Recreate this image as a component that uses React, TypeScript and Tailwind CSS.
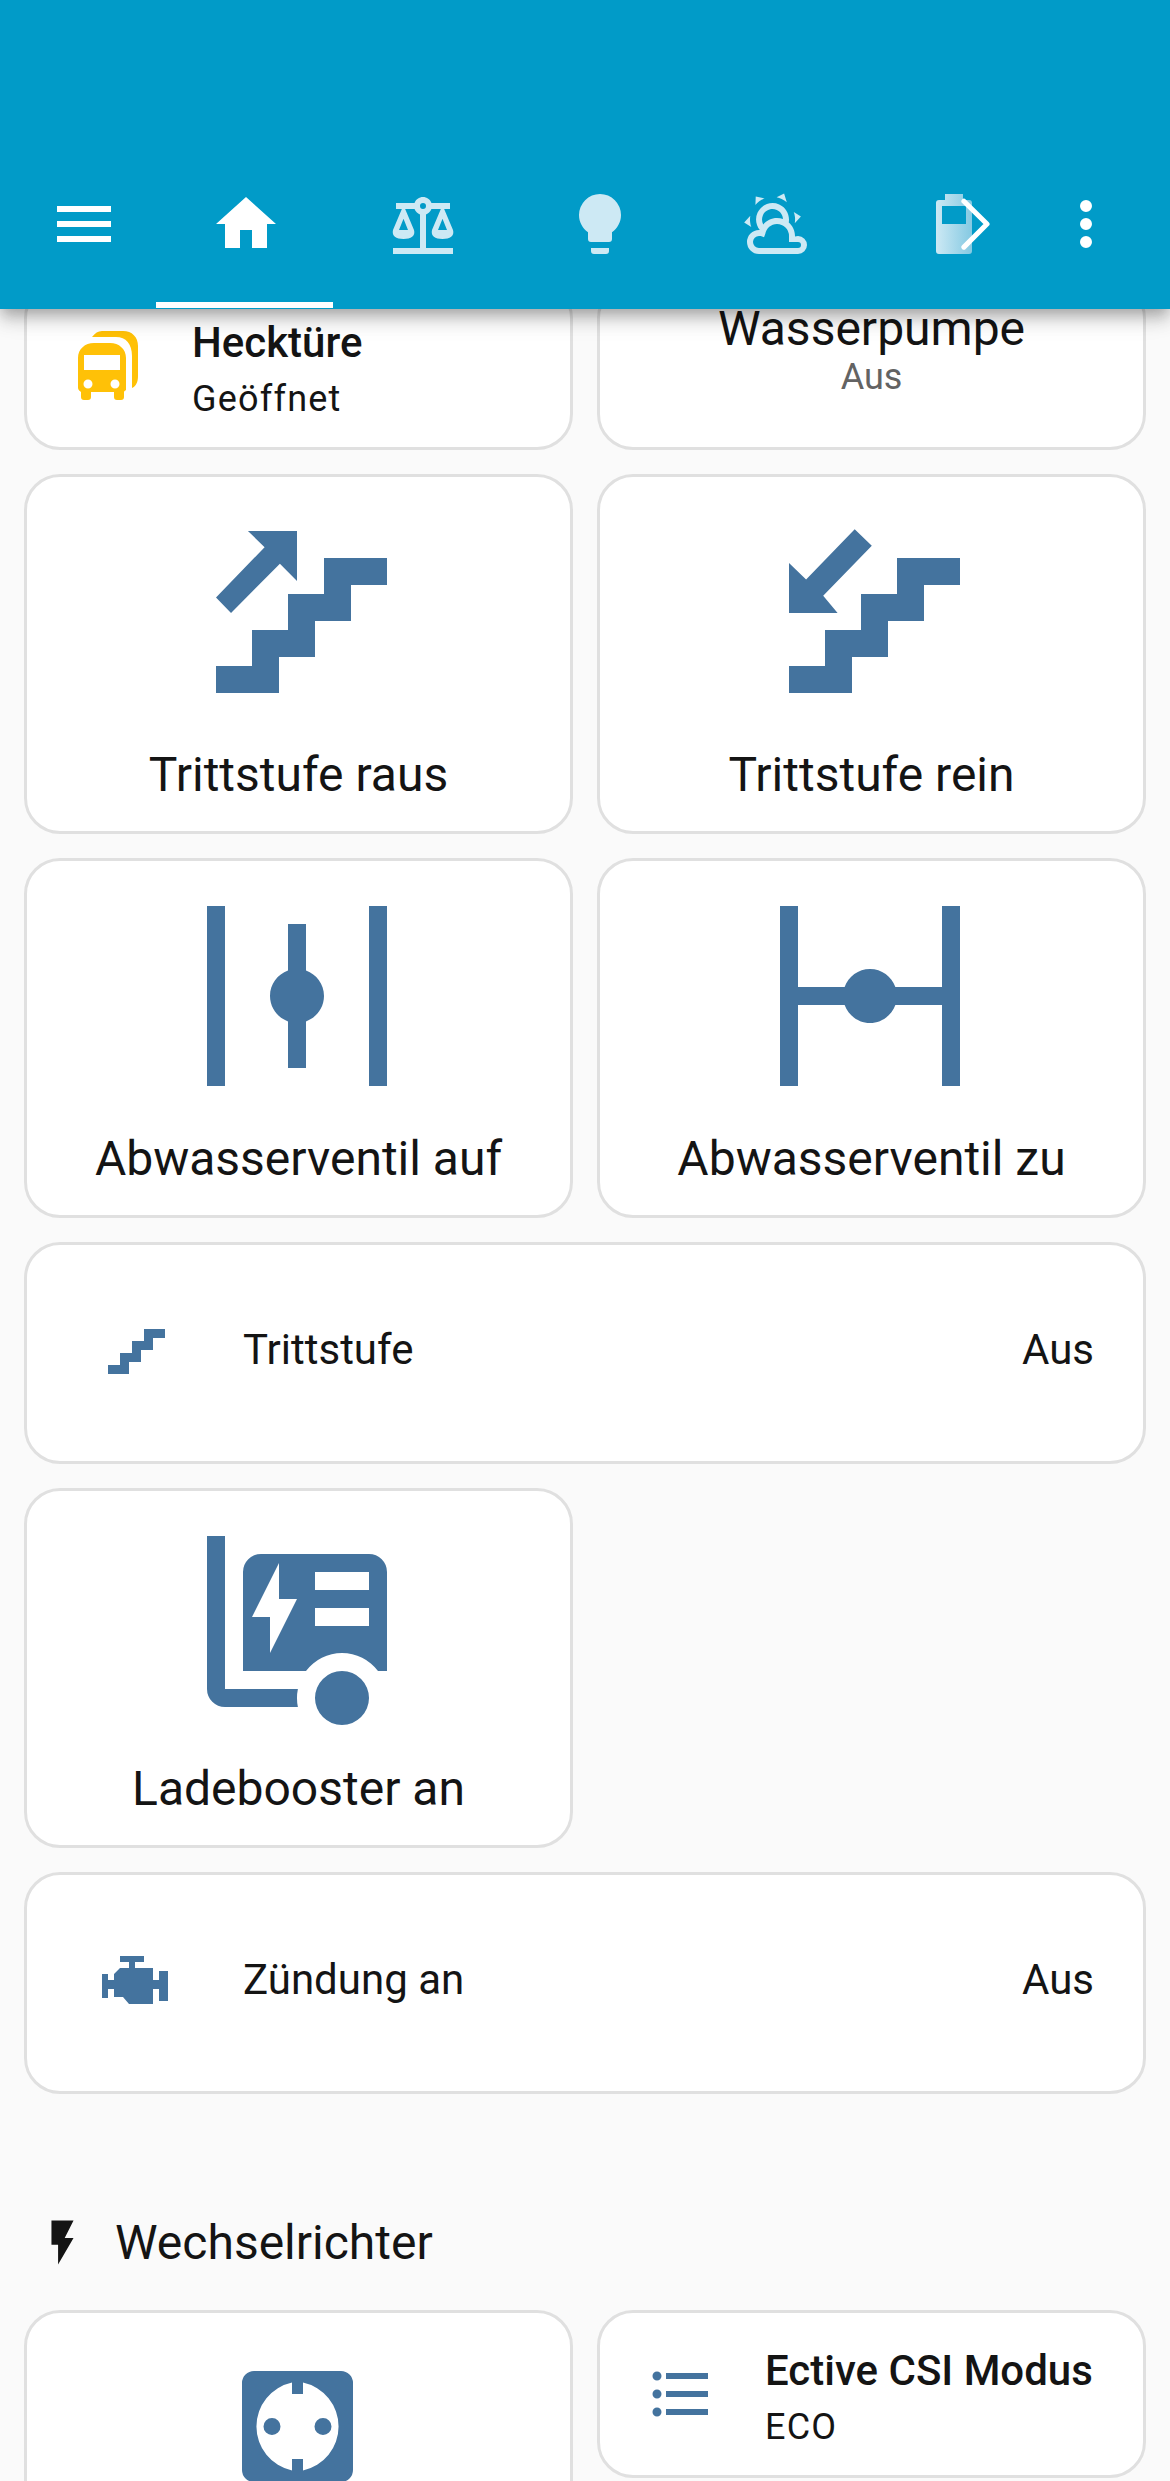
import React from "react";

const BLUE = "#44739e";

// material design icon paths
const icons = {
  menu: "M3,6H21V8H3V6M3,11H21V13H3V11M3,16H21V18H3V16Z",
  home: "M10,20V14H14V20H19V12H22L12,3L2,12H5V20H10Z",
  scale:
    "M12,3C10.73,3 9.6,3.8 9.18,5H3V7H4.95L2,14C1.53,16 3,17 5.5,17C8,17 9.56,16 9,14L6.05,7H9.17C9.5,7.85 10.15,8.5 11,8.83V20H2V22H22V20H13V8.82C13.85,8.5 14.5,7.85 14.82,7H17.95L15,14C14.53,16 16,17 18.5,17C21,17 22.56,16 22,14L19.05,7H21V5H14.83C14.4,3.8 13.27,3 12,3M12,5A1,1 0 0,1 13,6A1,1 0 0,1 12,7A1,1 0 0,1 11,6A1,1 0 0,1 12,5M5.5,10.25L7,14H4L5.5,10.25M18.5,10.25L20,14H17L18.5,10.25Z",
  bulb: "M12,2A7,7 0 0,0 5,9C5,11.38 6.19,13.47 8,14.74V17A1,1 0 0,0 9,18H15A1,1 0 0,0 16,17V14.74C17.81,13.47 19,11.38 19,9A7,7 0 0,0 12,2M9,21A1,1 0 0,0 10,22H14A1,1 0 0,0 15,21V20H9V21Z",
  weather:
    "M12.74,5.47C15.1,6.5 16.35,9.03 15.92,11.46C17.19,12.56 18,14.19 18,16V16.17C18.31,16.06 18.65,16 19,16A3,3 0 0,1 22,19A3,3 0 0,1 19,22H6A4,4 0 0,1 2,18A4,4 0 0,1 6,14H6.27C5,12.45 4.6,10.24 5.5,8.26C6.72,5.5 9.97,4.24 12.74,5.47M11.93,7.3C10.16,6.5 8.09,7.31 7.31,9.07C6.85,10.09 6.93,11.25 7.41,12.17C8.5,10.83 10.16,10 12,10C12.7,10 13.38,10.12 14,10.34C13.94,9.06 13.18,7.86 11.93,7.3M13.55,3.64C13,3.4 12.45,3.23 11.88,3.12L14.37,1.82L15.27,4.71C14.76,4.29 14.19,3.93 13.55,3.64M6.09,4.44C5.6,4.79 5.17,5.19 4.8,5.63L4.91,2.82L7.87,3.5C7.25,3.71 6.65,4.03 6.09,4.44M18,9.71C17.91,9.12 17.78,8.55 17.59,8L19.97,9.5L17.92,11.73C18.03,11.08 18.05,10.4 18,9.71M3.04,11.3C3.11,11.9 3.24,12.47 3.43,13L1.06,11.5L3.1,9.28C3,9.93 2.97,10.61 3.04,11.3M19,18H16V16A4,4 0 0,0 12,12C10,12 8.45,13.44 8.08,15.32L7.68,16.41L6.6,16.04C6.4,16 6.2,16 6,16A2,2 0 0,0 4,18A2,2 0 0,0 6,20H19A1,1 0 0,0 20,19A1,1 0 0,0 19,18Z",
  dots: "M12,16A2,2 0 0,1 14,18A2,2 0 0,1 12,20A2,2 0 0,1 10,18A2,2 0 0,1 12,16M12,10A2,2 0 0,1 14,12A2,2 0 0,1 12,14A2,2 0 0,1 10,12A2,2 0 0,1 12,10M12,4A2,2 0 0,1 14,6A2,2 0 0,1 12,8A2,2 0 0,1 10,6A2,2 0 0,1 12,4Z",
  stairs: "M15,5V9H11V13H7V17H3V20H10V16H14V12H18V8H22V5H15Z",
  stairsUp: "M15,6V10H11V14H7V18H3V21H10V17H14V13H18V9H22V6H15ZM12,3V8.55L10.1,6.65L4.67,12.1L3,10.4L8.4,4.8L6.55,3H12Z",
  stairsDown: "M15,6V10H11V14H7V18H3V21H10V17H14V13H18V9H22V6H15ZM10.3,2.8L12.2,4.65L6.8,10.2L8.4,12.1H3V6.55L4.9,8.4L10.3,2.8Z",
  valveOpen:
    "M22 2V22H20V2H22M2 2V22H4V2H2M11 4V9.18C9.84 9.6 9 10.7 9 12S9.84 14.4 11 14.82V20H13V14.82C14.16 14.4 15 13.3 15 12S14.16 9.6 13 9.18V4H11Z",
  valveClosed:
    "M22 2V22H20V13H14.82C14.4 14.16 13.3 15 12 15S9.6 14.16 9.18 13H4V22H2V2H4V11H9.18C9.6 9.84 10.7 9 12 9S14.4 9.84 14.82 11H20V2H22Z",
  booster:
    "M2 2H4V19H12.1A5 5 0 0 0 12.1 21H4A2 2 0 0 1 2 19ZM8 4H20A2 2 0 0 1 22 6V17H21A5 5 0 0 0 13 17H6V6A2 2 0 0 1 8 4ZM10 5V9H12L9 15V11H7ZM14 6V8H20V6ZM14 10V12H20V10ZM17 17A3 3 0 0 1 17 23A3 3 0 0 1 17 17Z",
  list: "M7,5H21V7H7V5M7,13V11H21V13H7M4,4.5A1.5,1.5 0 0,1 5.5,6A1.5,1.5 0 0,1 4,7.5A1.5,1.5 0 0,1 2.5,6A1.5,1.5 0 0,1 4,4.5M4,10.5A1.5,1.5 0 0,1 5.5,12A1.5,1.5 0 0,1 4,13.5A1.5,1.5 0 0,1 2.5,12A1.5,1.5 0 0,1 4,10.5M7,19V17H21V19H7M4,16.5A1.5,1.5 0 0,1 5.5,18A1.5,1.5 0 0,1 4,19.5A1.5,1.5 0 0,1 2.5,18A1.5,1.5 0 0,1 4,16.5Z",
  flash: "M7,2V13H10V22L17,10H13L17,2H7Z",
};

function Icon({ d, fill, className }: { d: string; fill: string; className: string }) {
  return (
    <svg viewBox="0 0 24 24" className={className} fill={fill} fillRule="evenodd">
      <path d={d} />
    </svg>
  );
}

function BatteryIcon() {
  return (
    <svg viewBox="0 0 24 24" className="h-[72px] w-[72px]">
      <defs>
        <linearGradient id="batt" x1="0" x2="1" y1="0" y2="0">
          <stop offset="0" stopColor="#cde9f4" />
          <stop offset="1" stopColor="#84c9e2" />
        </linearGradient>
      </defs>
      <path
        fill="url(#batt)"
        fillRule="evenodd"
        d="M9 2H15V4H17A1 1 0 0 1 18 5V21A1 1 0 0 1 17 22H7A1 1 0 0 1 6 21V5A1 1 0 0 1 7 4H9ZM8 6V12H16V6Z"
      />
      <path d="M15.3 4.4L23 12L15.3 19.7" fill="none" stroke="#fff" strokeWidth="1.7" strokeLinecap="round" strokeLinejoin="round" />
    </svg>
  );
}

function BusIcon() {
  return (
    <svg viewBox="12 22 72 72" className="h-[72px] w-[72px] shrink-0" fill="#ffc107" fillRule="evenodd">
      <path d="M32 29C35 25 38 23 42 23H63C72 23 78 29 78 38V68C78 74 76 78 72 80V48C72 36 66 29 56 29Z" />
      <path d="M34 35H50C59 35 66 41 66 50V82C66 82 64 83 64 84V89A3 3 0 0 1 61 92H57A3 3 0 0 1 54 89V84H31V89A3 3 0 0 1 28 92H24A3 3 0 0 1 21 89V84C20 83 18 82 18 80V50C18 41 25 35 34 35ZM24 47V62H60V47ZM28 71.5A4.5 4.5 0 0 0 28 80.5A4.5 4.5 0 0 0 28 71.5ZM55 71.5A4.5 4.5 0 0 0 55 80.5A4.5 4.5 0 0 0 55 71.5Z" />
    </svg>
  );
}

function EngineIcon() {
  return (
    <svg viewBox="9 7 72 72" className="h-[72px] w-[72px] shrink-0" fill={BLUE}>
      <path d="M30 19H54V25H45V31H63V43H69V34H78V64H69V52H63V67H39L33 60H24V52H18V61H12V37H18V43H24V37L30 31H39V25H30Z" />
    </svg>
  );
}

function SocketIcon() {
  return (
    <svg viewBox="0 0 111 111" className="-ml-[3px] h-[111px] w-[111px]" fill={BLUE} fillRule="evenodd">
      <path d="M12 0H99A12 12 0 0 1 111 12V99A12 12 0 0 1 99 111H12A12 12 0 0 1 0 99V12A12 12 0 0 1 12 0ZM50 11.5A45 45 0 0 0 50 99.5V88H61V99.5A45 45 0 0 0 61 11.5V23H50ZM30 47A8.5 8.5 0 0 0 30 64A8.5 8.5 0 0 0 30 47ZM81 47A8.5 8.5 0 0 0 81 64A8.5 8.5 0 0 0 81 47Z" />
    </svg>
  );
}

function Card({ className = "", children }: { className?: string; children: React.ReactNode }) {
  return (
    <div className={`rounded-[36px] border-[3px] border-[#e0e0e0] bg-white ${className}`}>{children}</div>
  );
}

function ButtonCard({ icon, label }: { icon: React.ReactNode; label: string }) {
  return (
    <Card className="flex h-[360px] flex-col items-center overflow-hidden pt-[27px]">
      <div className="-ml-[3px]">{icon}</div>
      <span className="mt-[28px] text-[48px] leading-[54px]">{label}</span>
    </Card>
  );
}

function Tile({ icon, name, state }: { icon: React.ReactNode; name: string; state: string }) {
  return (
    <Card className="flex h-[168px] items-center pl-[45px]">
      {icon}
      <div className="ml-[48px] flex flex-col pt-[9px]">
        <span className="text-[42px] font-medium leading-[56px]">{name}</span>
        <span className="text-[36px] leading-[56px] tracking-[1.2px]">{state}</span>
      </div>
    </Card>
  );
}

function EntityRow({ icon, label }: { icon: React.ReactNode; label: string }) {
  return (
    <Card className="flex h-[222px] items-start pl-[72px] pr-[49px] pt-[69px]">
      {icon}
      <span className="ml-[72px] mt-[3px] text-[42px] leading-[66px]">{label}</span>
      <span className="ml-auto mt-[3px] text-[42px] leading-[66px]">Aus</span>
    </Card>
  );
}

const tabs = [
  { d: icons.scale },
  { d: icons.bulb },
  { d: icons.weather },
];

export default function App() {
  return (
    <div
      className="h-[2481px] w-[1170px] overflow-hidden bg-[#fafafa] text-[#141414]"
      style={{ fontFamily: "Roboto, sans-serif" }}
    >
      <header className="relative z-10 flex h-[309px] items-start bg-[#019bc8] pl-[48px] pt-[188px] shadow-[0_6px_12px_-3px_rgba(0,0,0,0.2),0_12px_15px_0_rgba(0,0,0,0.14),0_3px_30px_0_rgba(0,0,0,0.12)]">
        <Icon d={icons.menu} fill="#fff" className="h-[72px] w-[72px]" />
        <nav className="ml-[36px] flex">
          <div className="flex h-[120px] w-[177px] justify-center border-b-[6px] border-white pl-[3px]">
            <Icon d={icons.home} fill="#fff" className="h-[72px] w-[72px]" />
          </div>
          {tabs.map((t) => (
            <div key={t.d} className="flex h-[120px] w-[177px] justify-center pl-[3px]">
              <Icon d={t.d} fill="#cde9f4" className="h-[72px] w-[72px]" />
            </div>
          ))}
          <div className="flex h-[120px] w-[177px] justify-center pl-[3px]">
            <BatteryIcon />
          </div>
        </nav>
        <Icon d={icons.dots} fill="#fff" className="ml-[9px] h-[72px] w-[72px]" />
      </header>

      <main className="-mt-[27px] flex flex-col gap-[24px] px-[24px]">
        <div className="grid grid-cols-2 gap-[24px]">
          <Tile icon={<BusIcon />} name="Hecktüre" state="Geöffnet" />
          <Card className="flex h-[168px] flex-col items-center pt-[17px]">
            <span className="text-[48px] leading-[54px]">Wasserpumpe</span>
            <span className="text-[36px] leading-[43px] text-[#636363]">Aus</span>
          </Card>
        </div>

        <div className="grid grid-cols-2 gap-[24px]">
          <ButtonCard icon={<Icon d={icons.stairsUp} fill={BLUE} className="h-[216px] w-[216px] shrink-0" />} label="Trittstufe raus" />
          <ButtonCard icon={<Icon d={icons.stairsDown} fill={BLUE} className="h-[216px] w-[216px] shrink-0" />} label="Trittstufe rein" />
        </div>

        <div className="grid grid-cols-2 gap-[24px]">
          <ButtonCard icon={<Icon d={icons.valveOpen} fill={BLUE} className="h-[216px] w-[216px] shrink-0" />} label="Abwasserventil auf" />
          <ButtonCard icon={<Icon d={icons.valveClosed} fill={BLUE} className="h-[216px] w-[216px] shrink-0" />} label="Abwasserventil zu" />
        </div>

        <EntityRow icon={<Icon d={icons.stairs} fill={BLUE} className="h-[72px] w-[72px] shrink-0" />} label="Trittstufe" />

        <div className="grid grid-cols-2 gap-[24px]">
          <ButtonCard icon={<Icon d={icons.booster} fill={BLUE} className="h-[216px] w-[216px] shrink-0" />} label="Ladebooster an" />
        </div>

        <EntityRow icon={<EngineIcon />} label="Zündung an" />

        <h2 className="mb-[17px] mt-[98px] flex h-[53px] items-center pl-[12px] text-[48px] font-normal">
          <Icon d={icons.flash} fill="#141414" className="h-[53px] w-[53px] shrink-0" />
          <span className="ml-[26px]">Wechselrichter</span>
        </h2>

        <div className="grid grid-cols-2 items-start gap-[24px]">
          <Card className="flex h-[360px] justify-center pt-[58px]">
            <SocketIcon />
          </Card>
          <Tile
            icon={<Icon d={icons.list} fill={BLUE} className="h-[72px] w-[72px] shrink-0" />}
            name="Ective CSI Modus"
            state="ECO"
          />
        </div>
      </main>
    </div>
  );
}
